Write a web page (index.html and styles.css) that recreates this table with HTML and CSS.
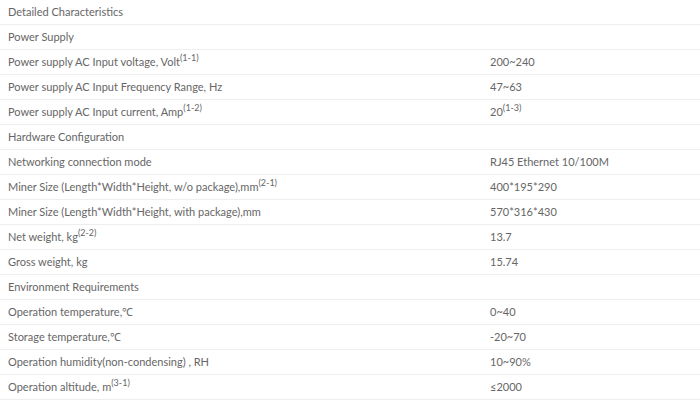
FILE: index.html
```html
<!DOCTYPE html>
<html lang="en">
<head>
    <meta charset="UTF-8">
    <title>Detailed Characteristics</title>
    <link rel="stylesheet" href="styles.css">
</head>
<body>

<table class="specs">
    <tr class="section first"><td colspan="2">Detailed Characteristics</td></tr>
    <tr class="section"><td colspan="2">Power Supply</td></tr>
    <tr><td class="name">Power supply AC Input voltage, Volt<sup>(1-1)</sup></td><td>200~240</td></tr>
    <tr><td class="name">Power supply AC Input Frequency Range, Hz</td><td>47~63</td></tr>
    <tr><td class="name">Power supply AC Input current, Amp<sup>(1-2)</sup></td><td>20<sup>(1-3)</sup></td></tr>
    <tr class="section"><td colspan="2">Hardware Configuration</td></tr>
    <tr><td class="name">Networking connection mode</td><td>RJ45 Ethernet 10/100M</td></tr>
    <tr><td class="name">Miner Size (Length*Width*Height, w/o package),mm<sup>(2-1)</sup></td><td>400*195*290</td></tr>
    <tr><td class="name">Miner Size (Length*Width*Height, with package),mm</td><td>570*316*430</td></tr>
    <tr><td class="name">Net weight, kg<sup>(2-2)</sup></td><td>13.7</td></tr>
    <tr><td class="name">Gross weight, kg</td><td>15.74</td></tr>
    <tr class="section"><td colspan="2">Environment Requirements</td></tr>
    <tr><td class="name">Operation temperature,℃</td><td>0~40</td></tr>
    <tr><td class="name">Storage temperature,℃</td><td>-20~70</td></tr>
    <tr><td class="name">Operation humidity(non-condensing) , RH</td><td>10~90%</td></tr>
    <tr><td class="name">Operation altitude, m<sup>(3-1)</sup></td><td>≤2000</td></tr>
</table>

</body>
</html>
```

FILE: styles.css
```css
body {
    margin: 0;
    padding: 0;
    background-color: #fff;
    font-family: Lato, "Open Sans", sans-serif;
    font-size: 11px;
    color: #666;
}
.specs {
    width: 100%;
    border-collapse: collapse;
}
.specs td {
    height: 24px;
    padding: 0 8px;
    line-height: 14px;
    border-bottom: 1px solid #eee;
    text-align: left;
    vertical-align: middle;
}
.specs .first td {
    height: 23px;
    padding-bottom: 1px;
}
.specs td.name {
    width: 466px;
}
.specs sup {
    font-size: 9px;
    line-height: 0;
}
```
